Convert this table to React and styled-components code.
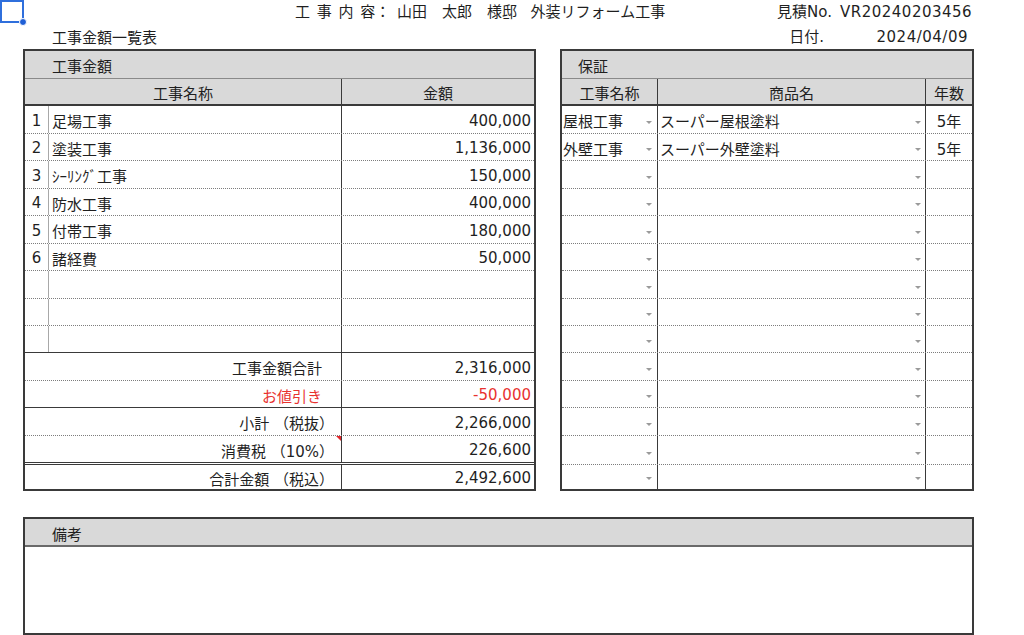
import styled, { createGlobalStyle } from "styled-components";

const GlobalStyle = createGlobalStyle`
  html, body {
    margin: 0;
    padding: 0;
    background: #fff;
  }
  body {
    font-family: "DejaVu Sans", "Noto Sans CJK JP", sans-serif;
    font-size: 15px;
    color: #1f1f1f;
  }
`;

const LINE = "#3a3a3a";
const FILL = "#d9d9d9";

const Page = styled.div`
  position: relative;
  width: 1024px;
  height: 635px;
  overflow: hidden;
  background: #fff;
`;

const SelectMark = styled.div`
  position: absolute;
  left: 0;
  top: 0;
  width: 24px;
  height: 23px;
  box-sizing: border-box;
  border: 2px solid #2f6fdc;

  &::after {
    content: "";
    position: absolute;
    right: -5px;
    bottom: -5px;
    width: 6px;
    height: 6px;
    border-radius: 50%;
    background: #1f5fd6;
    border: 1px solid #fff;
  }
`;

const TopBar = styled.header`
  display: grid;
  grid-template-columns: 52px 243px 1fr 210px;
  grid-template-rows: 24px 25px;
  height: 49px;
  padding-right: 56px;
  line-height: 18px;
`;

const Subject = styled.div`
  grid-column: 3;
  grid-row: 1;
  align-self: center;
  word-spacing: 2px;
  white-space: nowrap;
`;

const DocTitle = styled.div`
  grid-column: 2 / 4;
  grid-row: 2;
  align-self: center;
  padding-top: 3px;
`;

const MetaRow = styled.div`
  grid-column: 4;
  grid-row: ${(p) => p.row};
  display: flex;
  justify-content: flex-end;
  align-items: center;
  white-space: nowrap;
`;

const MetaLabel = styled.span`
  margin-right: ${(p) => p.gap}px;
`;

const MetaValue = styled.span`
  width: 128px;
  text-align: right;
  letter-spacing: 0.5px;
`;

const Sheets = styled.section`
  display: flex;
  align-items: flex-start;
  gap: 24px;
  padding-left: 23px;
`;

const Sheet = styled.div`
  width: ${(p) => p.width}px;
  box-sizing: border-box;
  border: 2px solid ${LINE};
`;

const SheetTitle = styled.div`
  height: 28px;
  box-sizing: border-box;
  display: flex;
  align-items: center;
  padding: 2px 0 0 ${(p) => p.indent}px;
  background: ${FILL};
  border-bottom: 1px solid #8a8a8a;
`;

const borders = {
  dotted: "1px dotted #7d7d7d",
  solid: `1px solid ${LINE}`,
  double: `3px double ${LINE}`,
  thick: `2px solid ${LINE}`,
  none: "none",
};

const Row = styled.div`
  display: grid;
  grid-template-columns: ${(p) => p.cols};
  height: ${(p) => p.h}px;
  box-sizing: border-box;
  border-bottom: ${(p) => borders[p.line]};
  background: ${(p) => (p.head ? FILL : "transparent")};
`;

const Cell = styled.div`
  position: relative;
  display: flex;
  align-items: center;
  justify-content: ${(p) => p.align || "flex-start"};
  box-sizing: border-box;
  padding: 2px ${(p) => p.pr || 0}px 0 ${(p) => p.pl || 0}px;
  grid-column: ${(p) => p.span || "auto"};
  border-right: ${(p) =>
    p.edge === "light" ? "1px solid #a8a8a8" : p.edge ? `1px solid ${LINE}` : "none"};
  color: ${(p) => (p.red ? "#e8322f" : "inherit")};
  white-space: nowrap;
  min-width: 0;

  ${(p) =>
    p.note &&
    `
    &::after {
      content: "";
      position: absolute;
      top: 0;
      right: 0;
      border-top: 5px solid #e0252a;
      border-left: 5px solid transparent;
    }
  `}
`;

const Drop = styled.span`
  margin-left: auto;
  align-self: flex-end;
  margin-bottom: 9px;
  width: 0;
  height: 0;
  border-left: 3px solid transparent;
  border-right: 3px solid transparent;
  border-top: 3px solid #9a9a9a;
`;

const Remarks = styled.section`
  margin: 26px 0 0 23px;
  width: 951px;
  height: 118px;
  box-sizing: border-box;
  border: 2px solid ${LINE};
`;

const RemarksHead = styled.div`
  height: 28px;
  box-sizing: border-box;
  display: flex;
  align-items: center;
  padding: 2px 0 0 27px;
  background: ${FILL};
  border-bottom: 2px solid #6a6a6a;
`;

const LEFT_COLS = "24px 293px 1fr";
const RIGHT_COLS = "96px 268px 1fr";

const items = [
  { no: 1, name: "足場工事", amount: "400,000" },
  { no: 2, name: "塗装工事", amount: "1,136,000" },
  { no: 3, name: "ｼｰﾘﾝｸﾞ工事", amount: "150,000" },
  { no: 4, name: "防水工事", amount: "400,000" },
  { no: 5, name: "付帯工事", amount: "180,000" },
  { no: 6, name: "諸経費", amount: "50,000" },
  {},
  {},
  {},
];

const itemHeights = [28, 27, 28, 27, 28, 27, 28, 27, 27];

const totals = [
  { label: "工事金額合計", amount: "2,316,000", h: 28, line: "dotted", pr: 19 },
  { label: "お値引き", amount: "-50,000", h: 27, line: "solid", pr: 19, red: true },
  { label: "小計 （税抜）", amount: "2,266,000", h: 28, line: "dotted", pr: 7 },
  { label: "消費税 （10%）", amount: "226,600", h: 29, line: "double", pr: 7, note: true },
  { label: "合計金額 （税込）", amount: "2,492,600", h: 24, line: "none", pr: 7 },
];

const warranty = [
  { work: "屋根工事", product: "スーパー屋根塗料", years: "5年" },
  { work: "外壁工事", product: "スーパー外壁塗料", years: "5年" },
];

const rowHeights = [...itemHeights, ...totals.map((t) => t.h)];

export default function App() {
  return (
    <Page>
      <GlobalStyle />
      <SelectMark />

      <TopBar>
        <Subject>{"工 事 内 容： 山田　太郎　様邸\u00a0 外装リフォーム工事"}</Subject>
        <DocTitle>工事金額一覧表</DocTitle>
        <MetaRow row={1}>
          <MetaLabel gap={8}>見積No.</MetaLabel>
          <MetaValue>VR20240203456</MetaValue>
        </MetaRow>
        <MetaRow row={2}>
          <MetaLabel gap={16}>日付.</MetaLabel>
          <MetaValue>2024/04/09</MetaValue>
        </MetaRow>
      </TopBar>

      <Sheets>
        <Sheet width={513}>
          <SheetTitle indent={27}>工事金額</SheetTitle>
          <Row cols={LEFT_COLS} h={27} line="thick" head>
            <Cell span="1 / 3" align="center" edge>工事名称</Cell>
            <Cell align="center">金額</Cell>
          </Row>
          {items.map((it, i) => (
            <Row key={i} cols={LEFT_COLS} h={itemHeights[i]} line={i === 8 ? "solid" : "dotted"}>
              <Cell align="center" edge="light">{it.no}</Cell>
              <Cell pl={3} edge>{it.name}</Cell>
              <Cell align="flex-end" pr={3}>{it.amount}</Cell>
            </Row>
          ))}
          {totals.map((t) => (
            <Row key={t.label} cols={LEFT_COLS} h={t.h} line={t.line}>
              <Cell span="1 / 3" align="flex-end" pr={t.pr} edge red={t.red} note={t.note}>
                {t.label}
              </Cell>
              <Cell align="flex-end" pr={3} red={t.red}>{t.amount}</Cell>
            </Row>
          ))}
        </Sheet>

        <Sheet width={414}>
          <SheetTitle indent={16}>保証</SheetTitle>
          <Row cols={RIGHT_COLS} h={27} line="thick" head>
            <Cell align="center" edge>工事名称</Cell>
            <Cell align="center" edge>商品名</Cell>
            <Cell align="center">年数</Cell>
          </Row>
          {rowHeights.map((h, i) => {
            const w = warranty[i] || {};
            return (
              <Row key={i} cols={RIGHT_COLS} h={h} line={i === rowHeights.length - 1 ? "none" : "dotted"}>
                <Cell pl={1} pr={5} edge>
                  {w.work}
                  <Drop />
                </Cell>
                <Cell pl={2} pr={4} edge>
                  {w.product}
                  <Drop />
                </Cell>
                <Cell align="center">{w.years}</Cell>
              </Row>
            );
          })}
        </Sheet>
      </Sheets>

      <Remarks>
        <RemarksHead>備考</RemarksHead>
      </Remarks>
    </Page>
  );
}
